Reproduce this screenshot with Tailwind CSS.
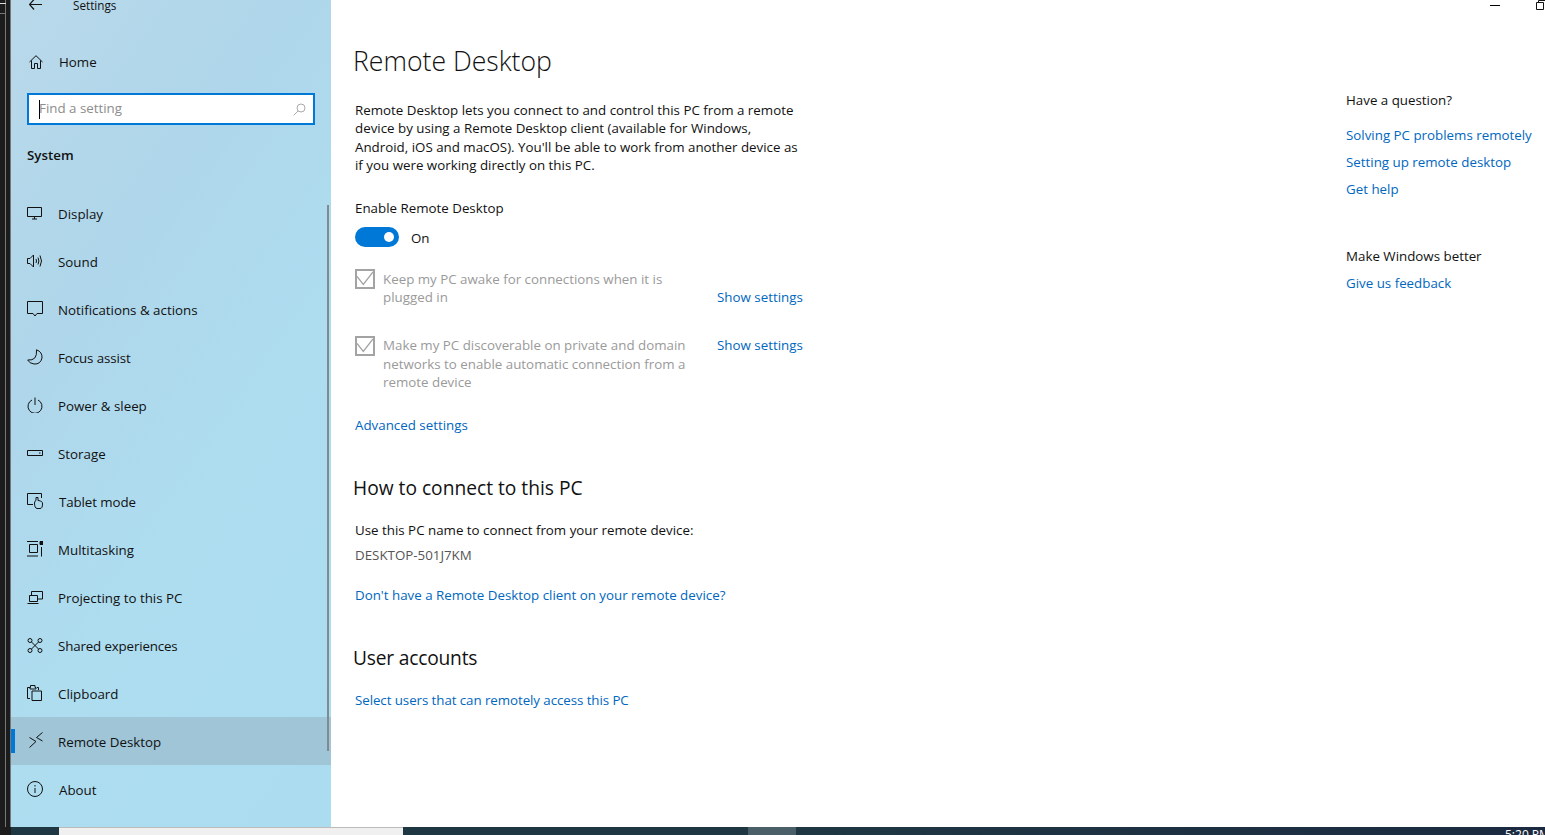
<!DOCTYPE html>
<html lang="en">
<head>
    <meta charset="UTF-8">
    <meta name="viewport" content="width=device-width, initial-scale=1.0">
    <title>Settings - Remote Desktop</title>
    <script src="https://cdn.jsdelivr.net/npm/@tailwindcss/browser@4"></script>
</head>
<body class="bg-white overflow-hidden font-['Open_Sans',sans-serif] text-[13.34px] text-[#111]">
<div class="flex flex-col h-[835px] w-[1545px] overflow-hidden relative">
    <div class="flex h-[827px]">
        <!-- window behind, left edge -->
        <div class="w-[11px] flex bg-[#1c1c1c] relative">
            <div class="w-[5px]"></div>
            <div class="w-px bg-[#777]"></div>
            <div class="w-[4px]"></div>
            <div class="w-px bg-[#777]"></div>
            <div class="absolute left-0 top-[3px] w-[6px] h-px bg-[#ddd]"></div>
            <div class="absolute left-0 top-[13px] w-[6px] h-px bg-[#777]"></div>
        </div>

        <!-- sidebar -->
        <aside class="w-[320px] relative bg-[linear-gradient(125deg,#b9d9ea_0%,#afd6ea_30%,#aeddf0_60%,#abdcef_100%)]">
            <div class="h-[12px] flex items-center pl-[18px] relative">
                <svg class="w-[13px] h-[12px]" viewBox="0 0 13 12" fill="none" stroke="#111" stroke-width="1.2"><path d="M.5 4.5H13M5 -.5L.5 4.5L5 9.5"/></svg>
                <span class="ml-[31px] text-[11.7px]">Settings</span>
            </div>
            <div class="h-[48px] mt-[26px] flex items-center pl-[18px]">
                <svg class="w-[14px] h-[14px] -mt-px" viewBox="0 0 14 14" fill="none" stroke="#111" stroke-width="1"><path d="M.5 7L7 .7L13.5 7M2.5 5.5V13.5H5.5V8.5H8.5V13.5H11.5V5.5"/></svg>
                <span class="ml-[16px]">Home</span>
            </div>
            <div class="mt-[7px] mx-[16px] h-[32px] w-[288px] border-2 border-[#0078d7] bg-white flex items-center pl-[10px] pr-[7px]">
                <div class="w-px h-[19px] bg-black"></div>
                <span class="text-[#8d8d8d] flex-1 -mt-[2px] -ml-px">Find a setting</span>
                <svg class="w-[13px] h-[13px]" viewBox="0 0 13 13" fill="none" stroke="#aaa" stroke-width="1"><circle cx="8" cy="5" r="4"/><path d="M5 8L.7 12.3"/></svg>
            </div>
            <div class="h-[20px] mt-[20px] pl-[16px] flex items-center font-semibold">System</div>

            <nav class="mt-[25px]">
                <div class="h-[48px] flex items-center pl-[16px]">
                    <svg class="w-[15px] h-[14px] -mt-[2px]" viewBox="0 0 15 14" fill="none" stroke="#111"><path d="M.5 1.5H14.5V10.5H.5ZM7.5 10.5V13M5 13H10"/></svg>
                    <span class="ml-[16px]">Display</span>
                </div>
                <div class="h-[48px] flex items-center pl-[16px]">
                    <svg class="w-[16px] h-[14px] -mt-[2px]" viewBox="0 0 16 14" fill="none" stroke="#111"><path d="M.5 4.5H3L6.5 1V13L3 9.5H.5ZM9 5Q10 7 9 9M11 3.5Q12.8 7 11 10.5M13 1.5Q16 7 13 12.5"/></svg>
                    <span class="ml-[15px]">Sound</span>
                </div>
                <div class="h-[48px] flex items-center pl-[16px]">
                    <svg class="w-[16px] h-[16px] -mt-[2px]" viewBox="0 0 16 16" fill="none" stroke="#111"><path d="M.5 .5H15.5V12.5H10L8 15L6 12.5H.5Z"/></svg>
                    <span class="ml-[15px]">Notifications &amp; actions</span>
                </div>
                <div class="h-[48px] flex items-center pl-[16px]">
                    <svg class="w-[16px] h-[16px] -mt-[2px]" viewBox="0 0 16 16" fill="none" stroke="#111"><path d="M9.5 .8Q15.5 3 15 9Q13.5 15.5 7 15Q2.5 14.5 .7 11Q10.5 12 9.5 .8Z"/></svg>
                    <span class="ml-[15px] tracking-[-0.1px]">Focus assist</span>
                </div>
                <div class="h-[48px] flex items-center pl-[16px]">
                    <svg class="w-[16px] h-[16px] -mt-[2px]" viewBox="0 0 16 16" fill="none" stroke="#111"><path d="M5 3A7 7 0 1 0 11 3M8 .5V8"/></svg>
                    <span class="ml-[15px]">Power &amp; sleep</span>
                </div>
                <div class="h-[48px] flex items-center pl-[16px]">
                    <svg class="w-[16px] h-[8px] -mt-[2px]" viewBox="0 0 16 8" fill="none" stroke="#111"><path d="M.5 1.5H15.5V6.5H.5ZM12 4H13.5"/></svg>
                    <span class="ml-[15px]">Storage</span>
                </div>
                <div class="h-[48px] flex items-center pl-[16px]">
                    <svg class="w-[17px] h-[16px] -mt-[2px]" viewBox="0 0 17 16" fill="none" stroke="#111"><path d="M6 11.5H.5V.5H14.5V5M10 15.5Q7.5 15 7.5 10Q7.5 8 9 7.5V4.5H11V7.5Q16 8 15.5 11Q15.5 15.5 13 15.5Z"/></svg>
                    <span class="ml-[15px] tracking-[-0.1px]">Tablet mode</span>
                </div>
                <div class="h-[48px] flex items-center pl-[16px]">
                    <svg class="w-[16px] h-[16px] -mt-[2px]" viewBox="0 0 16 16" fill="none" stroke="#111"><path d="M0 .5H11M2.5 3.5H10.5V11.5H2.5ZM0 15H11M14.5 6V15.5"/><path d="M13 .5H16V3.5H13Z" fill="#111"/></svg>
                    <span class="ml-[15px]">Multitasking</span>
                </div>
                <div class="h-[48px] flex items-center pl-[16px]">
                    <svg class="w-[16px] h-[13px] -mt-[2px]" viewBox="0 0 16 13" fill="none" stroke="#111"><path d="M4.5 4V.5H15.5V8H11M2.5 4.5H10.5V10.5H2.5ZM.5 12.5H11.5"/></svg>
                    <span class="ml-[15px]">Projecting to this PC</span>
                </div>
                <div class="h-[48px] flex items-center pl-[16px]">
                    <svg class="w-[16px] h-[15px] -mt-[2px]" viewBox="0 0 16 15" fill="none" stroke="#111"><circle cx="3" cy="2.5" r="2"/><circle cx="13" cy="2.5" r="2"/><circle cx="3" cy="12.5" r="2"/><circle cx="13" cy="12.5" r="2"/><path d="M4.5 4L11.5 11M11.5 4L4.5 11"/></svg>
                    <span class="ml-[15px] tracking-[-0.15px]">Shared experiences</span>
                </div>
                <div class="h-[48px] flex items-center pl-[16px]">
                    <svg class="w-[15px] h-[16px] -mt-[2px]" viewBox="0 0 15 16" fill="none" stroke="#111"><path d="M3 13.5H.5V2.5H3M10 2.5H11.5V5M3.5 2.5V.5H8V2.5H9V4H3V2.5ZM5 6H14.5V15.5H5Z"/></svg>
                    <span class="ml-[16px]">Clipboard</span>
                </div>
                <div class="h-[48px] -mt-px mb-px pt-[2px] flex items-center pl-[16px] bg-[#9fc5d7] relative">
                    <div class="absolute left-0 top-[12px] w-[4px] h-[24px] bg-[#0078d7]"></div>
                    <svg class="w-[14px] h-[16px] ml-[2px] -mt-[4px]" viewBox="0 0 14 16" fill="none" stroke="#111"><path d="M.5 5.5L7 9.5L.5 15.5M13.5 .5L7.5 5.5L13.5 9"/></svg>
                    <span class="ml-[15px]">Remote Desktop</span>
                </div>
                <div class="h-[48px] flex items-center pl-[16px]">
                    <svg class="w-[16px] h-[16px] -mt-[2px]" viewBox="0 0 16 16" fill="none" stroke="#111"><circle cx="8" cy="8" r="7.5"/><path d="M8 7V12M8 4V5.5"/></svg>
                    <span class="ml-[16px]">About</span>
                </div>
            </nav>

            <!-- scrollbar -->
            <div class="absolute right-[2px] top-[205px] w-[2px] h-[546px] bg-[#7f8b91]"></div>
        </aside>

        <!-- content -->
        <main class="flex-1 flex justify-between pl-[24px]">
            <div class="w-[450px]">
                <h1 class="h-[40px] mt-[42px] -ml-[2px] flex items-center font-light text-[26.6px]">Remote Desktop</h1>
                <p class="mt-[19px] leading-[18.33px] whitespace-nowrap">Remote Desktop lets you connect to and control this PC from a remote<br>device by using a Remote Desktop client (available for Windows,<br>Android, iOS and macOS). You'll be able to work from another device as<br>if you were working directly on this PC.</p>
                <div class="mt-[24px] h-[20px] flex items-center">Enable Remote Desktop</div>
                <div class="mt-[9px] h-[20px] flex items-center">
                    <div class="w-[44px] h-[20px] rounded-full bg-[#0078d7] flex items-center justify-end pr-[5px]">
                        <div class="w-[10px] h-[10px] rounded-full bg-white"></div>
                    </div>
                    <span class="ml-[12px] mt-[2px]">On</span>
                </div>

                <div class="mt-[22px] grid grid-cols-[28px_334px_auto] text-[#9a9a9a] leading-[18.33px] whitespace-nowrap">
                    <div class="w-[20px] h-[20px] border-2 border-[#a3a3a3]">
                        <svg class="w-[16px] h-[16px]" viewBox="0 0 16 16" fill="none" stroke="#a3a3a3" stroke-width="1.3"><path d="M0 5.5L6.3 13.5L16 1"/></svg>
                    </div>
                    <div class="pt-[0.6px]">Keep my PC awake for connections when it is<br>plugged in</div>
                    <a class="self-end text-[#0067c0]">Show settings</a>
                </div>
                <div class="mt-[29.5px] grid grid-cols-[28px_334px_auto] text-[#9a9a9a] leading-[18.33px] whitespace-nowrap">
                    <div class="w-[20px] h-[20px] border-2 border-[#a3a3a3]">
                        <svg class="w-[16px] h-[16px]" viewBox="0 0 16 16" fill="none" stroke="#a3a3a3" stroke-width="1.3"><path d="M0 5.5L6.3 13.5L16 1"/></svg>
                    </div>
                    <div class="pt-[0.3px]">Make my PC discoverable on private and domain<br>networks to enable automatic connection from a<br>remote device</div>
                    <a class="text-[#0067c0]">Show settings</a>
                </div>

                <a class="block mt-[24px] h-[20px] leading-[20px] text-[#0067c0]">Advanced settings</a>
                <h2 class="mt-[38px] h-[30px] -ml-[2px] flex items-center text-[19.2px]">How to connect to this PC</h2>
                <div class="mt-[17px] h-[20px] flex items-center">Use this PC name to connect from your remote device:</div>
                <div class="mt-[5px] h-[20px] flex items-center text-[#555]">DESKTOP-501J7KM</div>
                <a class="block mt-[20px] h-[20px] leading-[20px] text-[#0067c0]">Don't have a Remote Desktop client on your remote device?</a>
                <h2 class="mt-[38px] h-[30px] -ml-[2px] flex items-center text-[19.2px] tracking-[-0.2px]">User accounts</h2>
                <a class="block mt-[17px] h-[20px] leading-[20px] text-[#0067c0] tracking-[-0.07px]">Select users that can remotely access this PC</a>
            </div>

            <aside class="w-[199px] pt-[90px]">
                <div class="h-[20px] flex items-center">Have a question?</div>
                <a class="block mt-[15px] h-[20px] leading-[20px] text-[#0067c0]">Solving PC problems remotely</a>
                <a class="block mt-[7px] h-[20px] leading-[20px] text-[#0067c0]">Setting up remote desktop</a>
                <a class="block mt-[7px] h-[20px] leading-[20px] text-[#0067c0]">Get help</a>
                <div class="mt-[47px] h-[20px] flex items-center">Make Windows better</div>
                <a class="block mt-[7px] h-[20px] leading-[20px] text-[#0067c0]">Give us feedback</a>
            </aside>
        </main>
    </div>

    <!-- taskbar, cut off by the window bottom -->
    <div class="flex h-[8px] relative overflow-hidden bg-[#1f3743]">
        <div class="w-[59px] shrink-0 flex">
            <div class="w-[11px] bg-[#1c1c1c]"></div>
        </div>
        <div class="w-[344px] shrink-0 bg-[#f0f0f0] border-t border-[#bbb]"></div>
        <div class="ml-[345px] w-[48px] shrink-0 bg-[#4a5f68]"></div>
        <div class="flex-1 min-w-0 bg-[linear-gradient(90deg,#1f3743,#1b2a40)] text-white text-[12px] pl-[709px] leading-[16px] whitespace-nowrap">5:20 PM</div>
    </div>

    <!-- window controls -->
    <div class="absolute top-[5px] left-[1490px] w-[10px] h-px bg-black"></div>
    <svg class="absolute top-0 left-[1535px] w-[10px] h-[10px]" viewBox="0 0 10 10" fill="none" stroke="#111"><path d="M1.5 2.5H8.5V9.5H1.5ZM3.5 2.5V.5H10"/></svg>
</div>
</body>
</html>
